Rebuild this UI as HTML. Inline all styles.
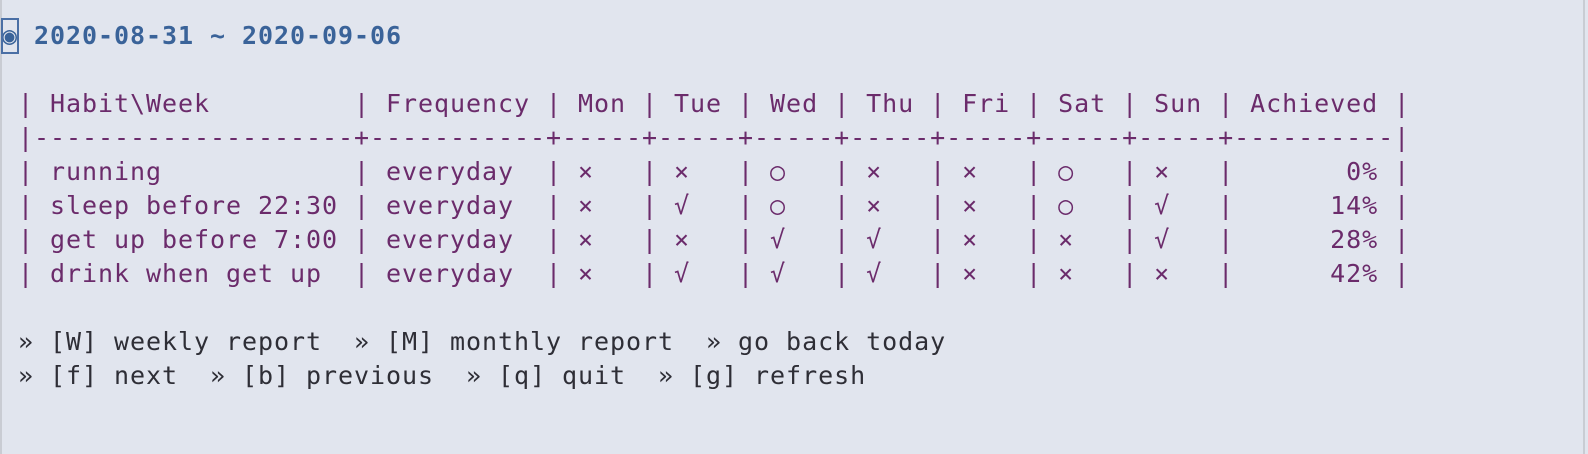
<!DOCTYPE html>
<html><head><meta charset="utf-8"><style>
html,body{margin:0;padding:0;width:1588px;height:454px;overflow:hidden;background:#e1e5ee;}
body{position:relative;}
pre{position:absolute;left:2px;top:19px;margin:0;font-family:"DejaVu Sans Mono","Liberation Mono",monospace;font-size:25px;letter-spacing:0.95px;line-height:33.95px;color:#6b2b6b;white-space:pre;}
.t{color:#3a6399;font-weight:bold;}
.f{color:#2e2e36;}
.cur{display:inline-block;outline:2px solid #4a6fa5;outline-offset:-1px;font-weight:normal;}
#l{position:absolute;left:0;top:0;width:2px;height:454px;background:#c9ccd3;}
#r{position:absolute;left:1583px;top:0;width:2px;height:454px;background:#c9ccd3;}
</style></head><body>
<div id="l"></div><div id="r"></div>
<pre><span class="t"><span class="cur">◉</span> 2020-08-31 ~ 2020-09-06</span>

 | Habit\Week         | Frequency | Mon | Tue | Wed | Thu | Fri | Sat | Sun | Achieved |
 |--------------------+-----------+-----+-----+-----+-----+-----+-----+-----+----------|
 | running            | everyday  | ×   | ×   | ○   | ×   | ×   | ○   | ×   |       0% |
 | sleep before 22:30 | everyday  | ×   | √   | ○   | ×   | ×   | ○   | √   |      14% |
 | get up before 7:00 | everyday  | ×   | ×   | √   | √   | ×   | ×   | √   |      28% |
 | drink when get up  | everyday  | ×   | √   | √   | √   | ×   | ×   | ×   |      42% |

<span class="f"> » [W] weekly report  » [M] monthly report  » go back today
 » [f] next  » [b] previous  » [q] quit  » [g] refresh</span></pre>
</body></html>
